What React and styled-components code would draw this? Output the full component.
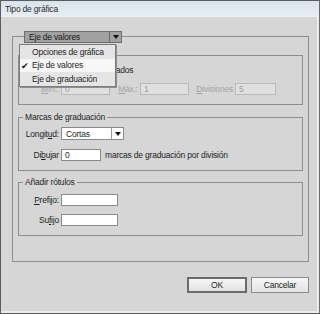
import React from 'react';
import styled, { createGlobalStyle } from 'styled-components';

const Global = createGlobalStyle`
  html, body { margin: 0; padding: 0; background: #d6d6d6; }
  body {
    font-family: 'Liberation Sans', Arial, sans-serif;
    font-size: 8.5px;
    letter-spacing: -0.2px;
    color: #1e1e1e;
  }
`;

const Win = styled.div`
  width: 320px;
  height: 314px;
  box-sizing: border-box;
  border: 1px solid #5c5c5c;
  border-right-color: #6a6a6a;
  background: #d6d6d6;
  display: flex;
  flex-direction: column;
  overflow: hidden;
`;

const TitleBar = styled.div`
  height: 15px;
  display: flex;
  align-items: center;
  padding-left: 4px;
  background: linear-gradient(#dae4ee, #e6edf3);
  border-bottom: 1px solid #eef2f5;
  color: #2a2a2a;
`;

const Body = styled.div`
  flex: 1;
  padding: 19px 0 0 11px;
  display: flex;
  flex-direction: column;
  box-shadow: inset -2px -2px 0 #ececec;
`;

const Outer = styled.div`
  position: relative;
  width: 297px;
  height: 226px;
  box-sizing: border-box;
  border: 1px solid #8e8e8e;
  padding: 0 5px;
  display: flex;
  flex-direction: column;
`;

const AxisSelect = styled.div`
  margin: -6px 0 0 6px;
  width: 98px;
  height: 12px;
  box-sizing: border-box;
  display: flex;
  align-items: center;
  background: #a1a1a1;
  border: 1px solid #6d6d6d;
  color: #1a1a1a;
`;

const SelectText = styled.span`
  flex: 1;
  padding-left: ${(p) => p.$pl || 4}px;
  white-space: nowrap;
`;

const Arrow = styled.span`
  width: 12px;
  height: 100%;
  box-sizing: border-box;
  border-left: 1px solid ${(p) => p.$line || '#6d6d6d'};
  display: flex;
  align-items: center;
  justify-content: center;
  &::after {
    content: '';
    border-left: 3px solid transparent;
    border-right: 3px solid transparent;
    border-top: 4px solid #111;
  }
`;

const Group = styled.div`
  position: relative;
  margin-top: ${(p) => p.$mt}px;
  height: ${(p) => p.$h}px;
  box-sizing: border-box;
  border: 1px solid #8e8e8e;
  display: flex;
  flex-direction: column;
`;

const Legend = styled.div`
  align-self: flex-start;
  margin: -7px 0 0 4px;
  padding: 0 2px;
  height: 12px;
  line-height: 12px;
  background: #d6d6d6;
  white-space: nowrap;
`;

const Row = styled.div`
  display: flex;
  align-items: center;
  margin-top: ${(p) => p.$mt || 0}px;
  padding-left: ${(p) => p.$pl || 0}px;
  white-space: nowrap;
`;

const Label = styled.span`
  width: ${(p) => p.$w || 40}px;
  text-align: right;
  margin-right: 2px;
  color: ${(p) => (p.$disabled ? '#a4a4a4' : '#1e1e1e')};
`;

const Key = styled.span`
  text-decoration: underline;
`;

const Field = styled.div`
  width: ${(p) => p.$w}px;
  height: ${(p) => p.$h || 12}px;
  box-sizing: border-box;
  display: flex;
  align-items: center;
  padding-left: 3px;
  background: ${(p) => (p.$disabled ? '#e0e0e0' : '#ffffff')};
  border: 1px solid ${(p) => (p.$disabled ? '#b9b9b9' : '#8a8a8a')};
  color: ${(p) => (p.$disabled ? '#9e9e9e' : '#1e1e1e')};
`;

const Check = styled.span`
  width: 9px;
  height: 9px;
  box-sizing: border-box;
  border: 1px solid #8a8a8a;
  background: #fff;
  margin-right: 4px;
`;

const Trailing = styled.span`
  margin-left: 4px;
`;

const Menu = styled.div`
  position: absolute;
  left: 6px;
  top: 7px;
  width: 97px;
  box-sizing: border-box;
  background: #e5e5e5;
  border: 1px solid #7c7c7c;
  box-shadow: 1px 1px 0 #8e8e8e;
  z-index: 2;
`;

const Item = styled.div`
  height: 13.5px;
  display: flex;
  align-items: center;
  padding-left: 12px;
  position: relative;
  background: ${(p) => (p.$active ? '#f6f6f6' : 'transparent')};
  white-space: nowrap;
`;

const Tick = styled.span`
  position: absolute;
  left: 1px;
  top: 2px;
  font-size: 9px;
`;

const Footer = styled.div`
  display: flex;
  justify-content: flex-end;
  gap: 4px;
  padding: 15px 10px 0 0;
`;

const Button = styled.div`
  width: ${(p) => p.$w}px;
  height: 16px;
  box-sizing: border-box;
  display: flex;
  align-items: center;
  justify-content: center;
  background: linear-gradient(#f7f7f7, #e2e2e2);
  border: ${(p) => (p.$default ? '2px solid #6b6b6b' : '1px solid #8a8a8a')};
  color: #1e1e1e;
`;

export default function App() {
  return (
    <>
      <Global />
      <Win>
        <TitleBar>Tipo de gráfica</TitleBar>
        <Body>
          <Outer>
            <AxisSelect>
              <SelectText>Eje de valores</SelectText>
              <Arrow />
            </AxisSelect>

            <Menu>
              <Item>Opciones de gráfica</Item>
              <Item $active>
                <Tick>✔</Tick>Eje de valores
              </Item>
              <Item>Eje de graduación</Item>
            </Menu>

            <Group $mt={12} $h={50}>
              <Legend>Valores de marcas</Legend>
              <Row $mt={4} $pl={4}>
                <Check />
                <span>Sustituir valores calculados</span>
              </Row>
              <Row $mt={8}>
                <Label $disabled>
                  <Key>M</Key>ín.:
                </Label>
                <Field $w={49} $disabled>0</Field>
                <Label $w={28} $disabled>
                  <Key>M</Key>áx.:
                </Label>
                <Field $w={49} $disabled>1</Field>
                <Label $w={44} $disabled>
                  <Key>D</Key>ivisiones
                </Label>
                <Field $w={41} $disabled>5</Field>
              </Row>
            </Group>

            <Group $mt={12} $h={54}>
              <Legend>Marcas de graduación</Legend>
              <Row $mt={4}>
                <Label>
                  Longit<Key>u</Key>d:
                </Label>
                <Field $w={63} $h={13}>
                  <SelectText $pl={1}>Cortas</SelectText>
                  <Arrow $line="#9a9a9a" />
                </Field>
              </Row>
              <Row $mt={9}>
                <Label>
                  Di<Key>b</Key>ujar
                </Label>
                <Field $w={40}>0</Field>
                <Trailing>marcas de graduación por división</Trailing>
              </Row>
            </Group>

            <Group $mt={11} $h={54}>
              <Legend>Añadir rótulos</Legend>
              <Row $mt={6}>
                <Label>
                  <Key>P</Key>refijo:
                </Label>
                <Field $w={57} />
              </Row>
              <Row $mt={8}>
                <Label>
                  Su<Key>f</Key>ijo
                </Label>
                <Field $w={57} />
              </Row>
            </Group>
          </Outer>

          <Footer>
            <Button $w={60} $default>OK</Button>
            <Button $w={58}>Cancelar</Button>
          </Footer>
        </Body>
      </Win>
    </>
  );
}
